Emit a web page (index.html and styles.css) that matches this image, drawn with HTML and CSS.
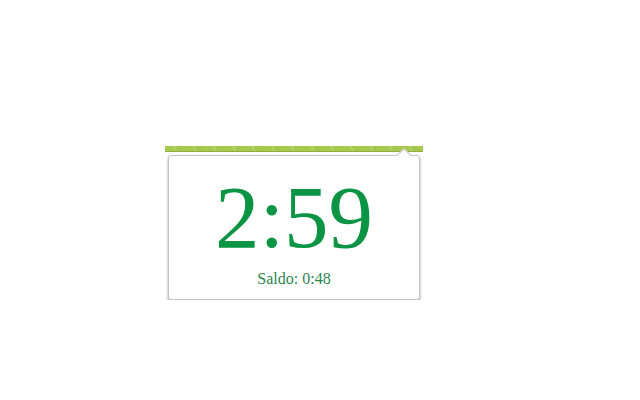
FILE: index.html
```html
<!DOCTYPE html>
<html>
<head>
<meta charset="utf-8">
<link rel="stylesheet" href="styles.css">
</head>
<body>
<div class="wrap">
  <div class="bar"></div>
  <div class="panel">
    <span class="arrow"></span>
    <div class="time">2:59</div>
    <div class="saldo">Saldo: 0:48</div>
  </div>
</div>
</body>
</html>
```
FILE: styles.css
```css
html, body {
  margin: 0;
  background: #ffffff;
}
.wrap {
  padding: 146px 0 0 165px;
}
.bar {
  width: 258px;
  height: 6px;
  background: repeating-linear-gradient(60deg, #a8c84e 0 9px, #b4d260 9px 11px, #a6c64c 11px 17px);
  border-bottom: 1px solid #93ad40;
  box-sizing: border-box;
}
.panel {
  position: relative;
  margin: 3px 0 0 3px;
  width: 252px;
  height: 145px;
  box-sizing: border-box;
  border: 1px solid #c4c4c4;
  border-radius: 3px;
  background: #fff;
  box-shadow: 0 2px 3px rgba(0,0,0,0.35);
  font-family: "Liberation Serif", "Times New Roman", serif;
  text-align: center;
  padding-top: 17px;
}
.arrow {
  position: absolute;
  top: -6px;
  left: 230px;
  width: 9px;
  height: 9px;
  background: #fff;
  border-left: 1px solid #c4c4c4;
  border-top: 1px solid #c4c4c4;
  transform: rotate(45deg);
}
.time {
  font-size: 89px;
  line-height: 89px;
  color: #0b9444;
}
.saldo {
  margin-top: 9px;
  font-size: 16px;
  line-height: 16px;
  color: #2e8550;
}
```
